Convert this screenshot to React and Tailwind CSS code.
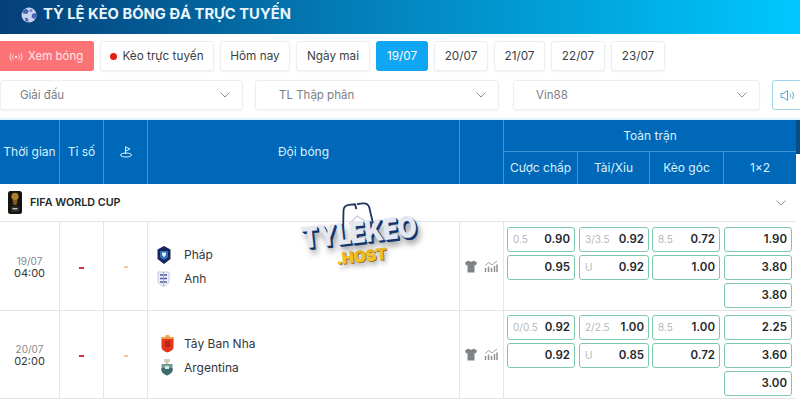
import React from 'react';

const Chevron = () => (
  <svg width="14" height="14" viewBox="0 0 14 14" fill="none" stroke="#8a9097" strokeWidth="1">
    <path d="M2.500 4.500 7 9l4.500-4.500" />
  </svg>
);

const Ball = () => (
  <svg width="16" height="16" viewBox="0 0 16 16">
    <circle cx="8" cy="8" r="7.500" fill="#c9d3ef" />
    <path d="M5 1.500 8 4 6 7 2 6.500 1.500 4ZM11 7l3.500-1 1 3-2 3-3-1.500ZM4 10.500l3 1 .5 3.500-3-1Z" fill="#4a63b5" />
    <circle cx="10" cy="3.500" r="1.500" fill="#6f8ad0" />
  </svg>
);

const Live = () => (
  <svg width="14" height="10" viewBox="0 0 14 10" fill="none" stroke="#ffd9da" strokeWidth="1">
    <circle cx="7" cy="5" r="1.200" fill="#ffd9da" stroke="none" />
    <path d="M4.500 2.500c-1.200 1.400-1.200 3.600 0 5M9.500 2.500c1.200 1.400 1.200 3.600 0 5M2.500 1C.5 3.200.5 6.800 2.500 9M11.500 1c2 2.200 2 5.800 0 8" />
  </svg>
);

const Trophy = () => (
  <svg width="14" height="23" viewBox="0 0 14 23">
    <rect width="14" height="23" rx="2.500" fill="#17130d" />
    <ellipse cx="7" cy="5.500" rx="3.600" ry="3.800" fill="#a9802f" />
    <path d="M4.500 9h5l-1 5h-3Z" fill="#7c5c20" />
    <rect x="3" y="15" width="8" height="6" rx="1" fill="#2c2a28" />
    <rect x="4.500" y="17" width="5" height="1.500" fill="#bdbdbd" />
  </svg>
);

const France = () => (
  <svg width="14" height="18" viewBox="0 0 14 18">
    <path d="M7 0 13.500 3.500V13L7 18 .5 13V3.500Z" fill="#17265c" />
    <path d="M3 5h8v6.500L7 14l-4-2.500Z" fill="#2f6fb5" />
    <path d="M5 6.500h4v2.500L7 11.500 5 9Z" fill="#e6edf6" />
  </svg>
);

const England = () => (
  <svg width="13" height="16" viewBox="0 0 13 16">
    <path d="M1 1h11v9c0 3-3 4.500-5.500 5.500C4 14.500 1 13 1 10Z" fill="#eef0f8" stroke="#b9bfdc" strokeWidth=".8" />
    <path d="M3 4h7M3 7.500h7M3 11h7" stroke="#4c5aa8" strokeWidth="1.300" />
    <path d="M6.500 1v14" stroke="#d98a94" strokeWidth=".8" />
  </svg>
);

const Spain = () => (
  <svg width="13" height="18" viewBox="0 0 13 18">
    <path d="M5 0h3l1 2H4Z" fill="#e8b13c" />
    <path d="M.5 2.500h12V12c0 3-3 4.500-6 5.500-3-1-6-2.500-6-5.500Z" fill="#e2361d" />
    <rect x="4" y="6" width="5" height="6" rx="1" fill="#b8261a" />
    <path d="M.5 2.500h12V4H.5Z" fill="#ef9d34" />
  </svg>
);

const Argentina = () => (
  <svg width="12" height="17" viewBox="0 0 12 17">
    <path d="M3 0h6v3H3Z" fill="#c9cfc9" />
    <circle cx="6" cy="4" r="1.500" fill="#d8c98a" />
    <path d="M.5 5h11v6c0 3-3 4.500-5.500 5.500C3.500 15.500.5 14 .5 11Z" fill="#6f9a96" />
    <path d="M.5 9h11v2.500c0 1.500-3 4-5.500 5-2.500-1-5.500-3.500-5.500-5Z" fill="#3d6a6b" />
    <path d="M4 7h4v3H4Z" fill="#dfe8e4" />
  </svg>
);

const Shirt = () => (
  <svg width="12" height="13" viewBox="0 0 12 13" fill="#7e8285">
    <path d="M3.500.5 0 2.500 1 5.500 2.500 5V12.500H9.500V5L11 5.500 12 2.500 8.500.5C8 2 4 2 3.500.5Z" />
  </svg>
);

const Chart = () => (
  <svg width="14" height="13" viewBox="0 0 14 13" fill="none" stroke="#8d9194">
    <path d="M1.500 12V8M4.500 12V6.500M7.500 12V8M10.500 12V6M13 12V4.500" strokeWidth="1.500" />
    <path d="M1 5.500 5 2.500 8 5l5-4" strokeWidth=".8" />
  </svg>
);

const Odd = ({ label, value }) => (
  <div className="flex h-[25px] items-center justify-between rounded-[3px] border border-[#7ec9ae] bg-white pl-[5px] pr-[4px]">
    <span className="text-[10px] text-[#b4b8bb]">{label}</span>
    <span className="text-[11.500px] font-semibold text-[#23272b]">{value}</span>
  </div>
);

const oddPads = ['px-[3px]', 'px-[1px]', 'pl-[2px] pr-[4px]', 'pr-[4px]'];

const Match = ({ date, time, teams, odds, h, pt }) => (
  <div className={`grid grid-cols-[60px_44px_44px_312px_44px_74px_72px_74px_72px] border-b border-[#e4e6e8] ${h}`}>
    <div className="flex flex-col items-center justify-center border-r border-[#e4e6e8] pt-[1px] leading-[12px]">
      <span className="text-[10px] text-[#85898d]">{date}</span>
      <span className="text-[11px] text-[#33373b]">{time}</span>
    </div>
    <div className="flex items-center justify-center border-r border-[#e4e6e8] pt-[3px]">
      <span className="h-[2px] w-[5px] bg-[#c9354a]" />
    </div>
    <div className="flex items-center justify-center border-r border-[#e4e6e8] pt-[2px]">
      <span className="h-[2px] w-[4px] bg-[#efc79a]" />
    </div>
    <div className="flex flex-col justify-center gap-[6px] border-r border-[#e4e6e8] pl-[9px] pt-[2px]">
      {teams.map((t) => (
        <div key={t.name} className="flex h-[18px] items-center">
          <div className={`flex w-[27px] ${t.indent}`}>{t.crest}</div>
          <span className="text-[12px] text-[#33373b]">{t.name}</span>
        </div>
      ))}
    </div>
    <div className="flex items-center justify-center gap-[7px] border-r border-[#e4e6e8]">
      <Shirt />
      <Chart />
    </div>
    {odds.map((col, i) => (
      <div key={i} className={`flex flex-col gap-[3px] ${pt} ${oddPads[i]}`}>
        {col.map((o, j) => (
          <Odd key={j} {...o} />
        ))}
      </div>
    ))}
  </div>
);

const Tab = ({ children, active, w }) => (
  <div
    className={`flex h-[30px] items-center justify-center rounded-[3px] pt-[1px] text-[11.750px] ${w} ${
      active
        ? 'bg-[#0fa7f3] text-white'
        : 'border border-[#eceef0] bg-white text-[#3b3f43] shadow-[0_1px_2px_rgba(0,0,0,0.06)]'
    }`}
  >
    {children}
  </div>
);

const Select = ({ label, w, pl }) => (
  <div className={`flex h-[30px] shrink-0 items-center justify-between rounded-[3px] border border-[#eceef0] bg-white pr-[10px] shadow-[0_1px_2px_rgba(0,0,0,0.05)] ${w} ${pl}`}>
    <span className="pt-[1px] text-[11.500px] text-[#7b8086]">{label}</span>
    <Chevron />
  </div>
);

const HeadCell = ({ children, className = '' }) => (
  <div className={`flex items-center justify-center border-r border-[#3f93d2] text-[12px] text-[#d9f1ff] ${className}`}>
    {children}
  </div>
);

const matches = [
  {
    date: '19/07',
    time: '04:00',
    h: 'h-[89px]',
    pt: 'pt-[5px]',
    teams: [
      { name: 'Pháp', crest: <France />, indent: 'pl-0' },
      { name: 'Anh', crest: <England />, indent: 'pl-0' },
    ],
    odds: [
      [{ label: '0.5', value: '0.90' }, { value: '0.95' }],
      [{ label: '3/3.5', value: '0.92' }, { label: 'U', value: '0.92' }],
      [{ label: '8.5', value: '0.72' }, { value: '1.00' }],
      [{ value: '1.90' }, { value: '3.80' }, { value: '3.80' }],
    ],
  },
  {
    date: '20/07',
    time: '02:00',
    h: 'h-[88px]',
    pt: 'pt-[4px]',
    teams: [
      { name: 'Tây Ban Nha', crest: <Spain />, indent: 'pl-[4px]' },
      { name: 'Argentina', crest: <Argentina />, indent: 'pl-[4px]' },
    ],
    odds: [
      [{ label: '0/0.5', value: '0.92' }, { value: '0.92' }],
      [{ label: '2/2.5', value: '1.00' }, { label: 'U', value: '0.85' }],
      [{ label: '8.5', value: '1.00' }, { value: '0.72' }],
      [{ value: '2.25' }, { value: '3.60' }, { value: '3.00' }],
    ],
  },
];

export default function App() {
  return (
    <div className="relative h-[400px] w-[800px] overflow-hidden bg-white font-['Inter',sans-serif]">
      <div className="flex h-[34px] items-center gap-[6px] bg-gradient-to-r from-[#053f78] via-[#0387c1] to-[#00c8ff] pb-[5px] pl-[21px]">
        <Ball />
        <h1 className="text-[14.750px] font-bold text-[#e9f6fd]">TỶ LỆ KÈO BÓNG ĐÁ TRỰC TUYẾN</h1>
      </div>

      <div className="mt-[7px] flex gap-[6px]">
        <div className="flex h-[30px] w-[94px] items-center gap-[5px] rounded-r-[3px] bg-[#fb7377] pl-[9px] pt-[1px] text-[11.500px] text-[#ffe6e6]">
          <Live />
          Xem bóng
        </div>
        <Tab w="w-[114px]">
          <span className="mr-[5px] h-[7px] w-[7px] rounded-full bg-[#e2200f]" />
          Kèo trực tuyến
        </Tab>
        <Tab w="w-[70px]">Hôm nay</Tab>
        <Tab w="w-[74px]">Ngày mai</Tab>
        <Tab w="w-[52px]" active>19/07</Tab>
        <Tab w="w-[54px]">20/07</Tab>
        <Tab w="w-[51px]">21/07</Tab>
        <Tab w="w-[54px]">22/07</Tab>
        <Tab w="w-[54px]">23/07</Tab>
      </div>

      <div className="mt-[9px] flex">
        <Select label="Giải đấu" w="w-[243px]" pl="pl-[19px]" />
        <div className="w-[12px] shrink-0" />
        <Select label="TL Thập phân" w="w-[244px]" pl="pl-[23px]" />
        <div className="w-[14px] shrink-0" />
        <Select label="Vin88" w="w-[247px]" pl="pl-[22px]" />
        <div className="w-[12px] shrink-0" />
        <div className="flex h-[30px] w-[30px] shrink-0 items-center justify-center rounded-[3px] border border-[#9fd3e6]">
          <svg width="15" height="13" viewBox="0 0 15 13" fill="none" stroke="#4ea9cf" strokeWidth="1">
            <path d="M1 4.500h2.500L7.500 1.500v10L3.500 8.500H1ZM10 4.500c.8 1.200.8 2.800 0 4M12.500 3c1.300 2 1.300 5 0 7" />
          </svg>
        </div>
      </div>

      <div className="mt-[8px] h-[2px] bg-[#dff4fc]" />

      <div className="w-[796px]">
        <div className="grid h-[64px] grid-cols-[60px_44px_44px_312px_44px_74px_72px_74px_72px] grid-rows-[32px_32px] bg-[#0068b8]">
          <HeadCell className="row-span-2">Thời gian</HeadCell>
          <HeadCell className="row-span-2">Tỉ số</HeadCell>
          <HeadCell className="row-span-2">
            <svg width="14" height="12" viewBox="0 0 14 12" fill="none" stroke="#d9f1ff" strokeWidth="1">
              <path d="M6.500 8V.8L11 3 6.500 5" />
              <ellipse cx="7" cy="9" rx="5.500" ry="2" />
            </svg>
          </HeadCell>
          <HeadCell className="row-span-2">Đội bóng</HeadCell>
          <HeadCell className="row-span-2" />
          <HeadCell className="col-span-4 border-b border-r-0">Toàn trận</HeadCell>
          <HeadCell>Cược chấp</HeadCell>
          <HeadCell>Tài/Xỉu</HeadCell>
          <HeadCell>Kèo góc</HeadCell>
          <HeadCell className="border-r-0">1×2</HeadCell>
        </div>

        <div className="flex h-[38px] items-center justify-between border-b border-[#e4e6e8] px-[8px]">
          <div className="flex items-center gap-[8px]">
            <Trophy />
            <span className="pt-[1px] text-[10.750px] font-semibold text-[#23272b]">FIFA WORLD CUP</span>
          </div>
          <Chevron />
        </div>

        {matches.map((m) => (
          <Match key={m.date} {...m} />
        ))}
      </div>

      <div className="absolute right-0 top-[120px] h-[34px] w-[4px] bg-[#0a4d86]" />

      {/* watermark over the table */}
      <div className="absolute left-[298px] top-[203px] flex w-[122px] -rotate-[6deg] flex-col items-center">
        <svg className="absolute -top-[1px] left-[43px]" width="36" height="24" viewBox="0 0 36 24" fill="none" stroke="#1d3560" strokeWidth="1.800">
          <path d="M3 23 5 7c.5-3 3-5 6-5h6l1 5M33 23 31 7c-.5-3-3-5-6-5h-6" />
          <path d="M9 21l9-7 9 7" stroke="#c9ced6" strokeWidth="1.200" />
        </svg>
        <span className="mt-[20px] origin-bottom scale-y-[1.200] whitespace-nowrap text-[24.500px] font-black leading-[22px] tracking-[-0.3px] text-[#e4e9f1] [text-shadow:1px_1px_0_#12366b,2px_2px_0_#12366b,3px_5px_6px_rgba(0,0,0,0.45)]">
          TYLEKEO
        </span>
        <span className="mt-[3px] text-[16px] font-black leading-[16px] tracking-[-0.3px] text-[#f2bf25] [text-shadow:1px_1px_0_#9a6b0c,2px_4px_5px_rgba(0,0,0,0.35)]">
          .HOST
        </span>
      </div>
    </div>
  );
}
